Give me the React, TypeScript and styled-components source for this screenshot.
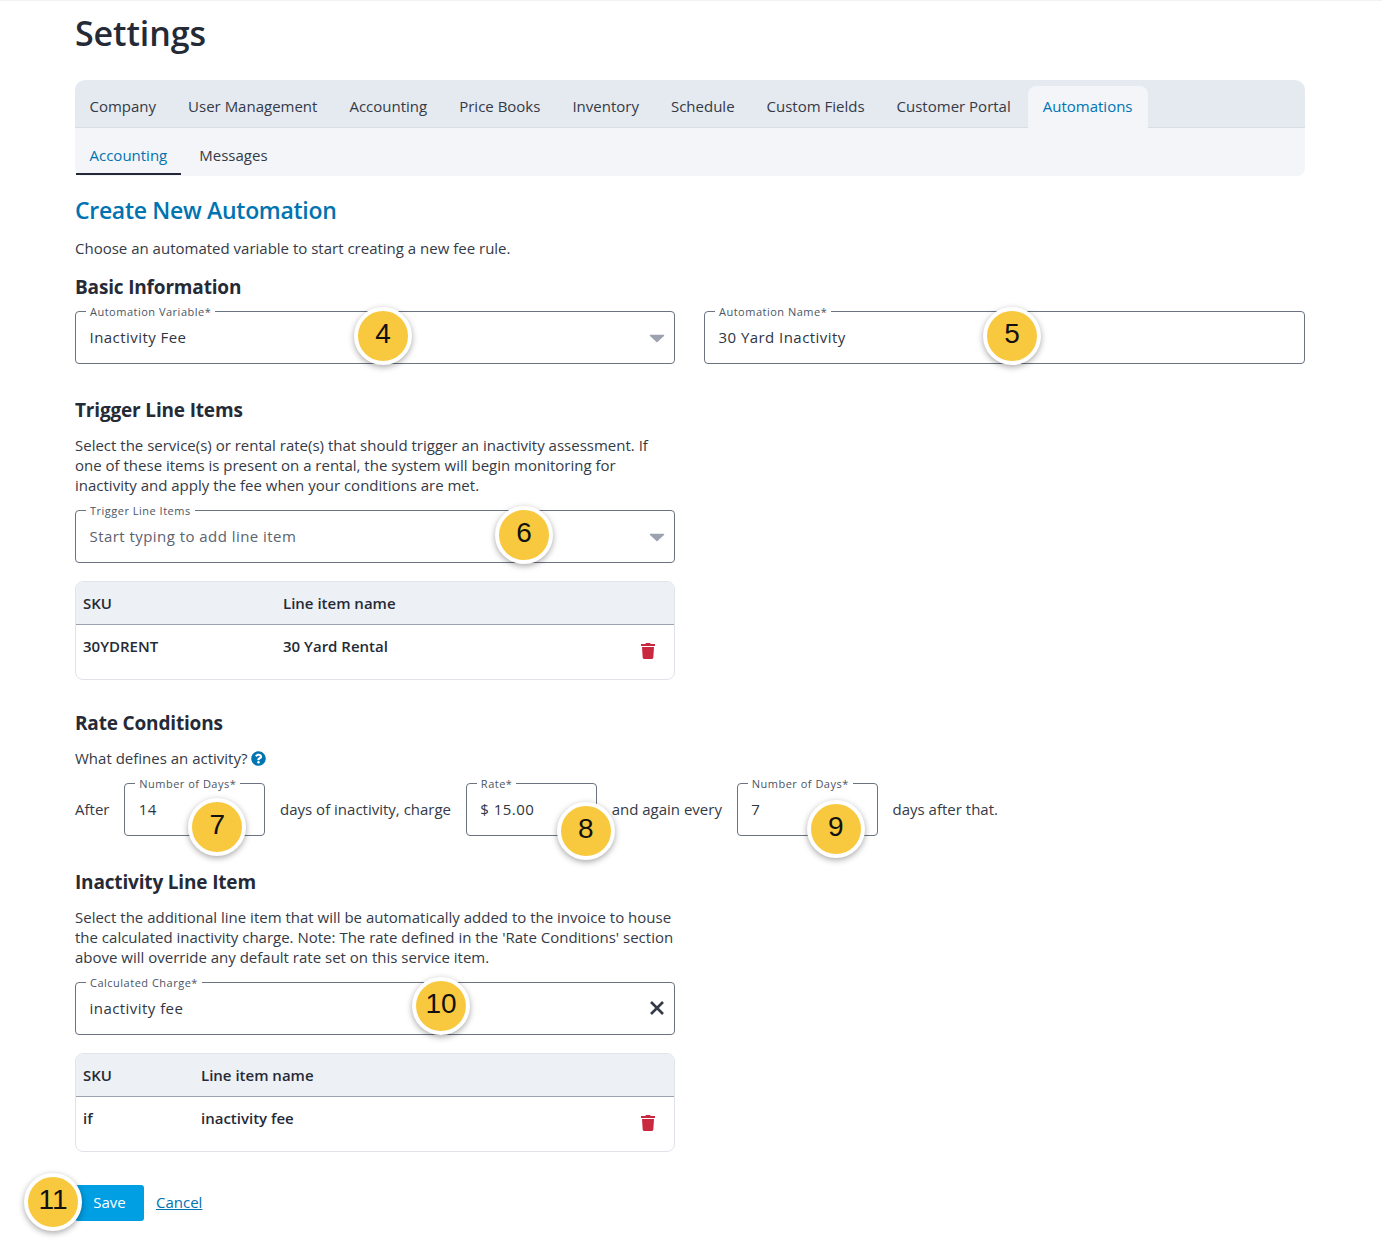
import styled, { createGlobalStyle } from 'styled-components';
import { FaTrash, FaQuestionCircle } from 'react-icons/fa';

const mainTabs = [
  'Company',
  'User Management',
  'Accounting',
  'Price Books',
  'Inventory',
  'Schedule',
  'Custom Fields',
  'Customer Portal',
  'Automations',
];

function Caret() {
  return (
    <CaretIcon viewBox="0 0 16 9">
      <path d="M1.5 1.5 H14.5 L8 7.5 Z" />
    </CaretIcon>
  );
}

export default function App() {
  return (
    <Page>
      <GlobalStyle />
      <PageTitle>Settings</PageTitle>

      <Tabs>
        {mainTabs.map((tab) => (
          <Tab key={tab} $active={tab === 'Automations'}>
            {tab}
          </Tab>
        ))}
      </Tabs>
      <SubTabs>
        <SubTab $active>Accounting</SubTab>
        <SubTab>Messages</SubTab>
      </SubTabs>

      <Heading>Create New Automation</Heading>
      <Intro>Choose an automated variable to start creating a new fee rule.</Intro>

      <SectionTitle $top={16}>Basic Information</SectionTitle>
      <TwoColumns>
        <Field>
          <FieldLabel>Automation Variable*</FieldLabel>
          <FieldValue>Inactivity Fee</FieldValue>
          <Caret />
          <Badge $left={278} $top={-5}>4</Badge>
        </Field>
        <Field>
          <FieldLabel>Automation Name*</FieldLabel>
          <FieldValue>30 Yard Inactivity</FieldValue>
          <Badge $left={278} $top={-5}>5</Badge>
        </Field>
      </TwoColumns>

      <SectionTitle $top={33}>Trigger Line Items</SectionTitle>
      <Description $top={12}>
        Select the service(s) or rental rate(s) that should trigger an inactivity assessment. If
        one of these items is present on a rental, the system will begin monitoring for
        inactivity and apply the fee when your conditions are met.
      </Description>
      <NarrowField $top={15}>
        <FieldLabel>Trigger Line Items</FieldLabel>
        <FieldValue $muted>Start typing to add line item</FieldValue>
        <Caret />
        <Badge $left={419} $top={-5}>6</Badge>
      </NarrowField>
      <ItemTable $columns="200px 1fr 50px">
        <TableHead>SKU</TableHead>
        <TableHead>Line item name</TableHead>
        <TableHead />
        <TableCell>30YDRENT</TableCell>
        <TableCell>30 Yard Rental</TableCell>
        <TableCell>
          <TrashIcon />
        </TableCell>
      </ItemTable>

      <SectionTitle $top={30}>Rate Conditions</SectionTitle>
      <Question>
        What defines an activity? <HelpIcon />
      </Question>
      <RateRow>
        <RateText>After</RateText>
        <SmallField $width={141}>
          <FieldLabel>Number of Days*</FieldLabel>
          <FieldValue>14</FieldValue>
          <Badge $left={63} $top={14}>7</Badge>
        </SmallField>
        <RateText>days of inactivity, charge</RateText>
        <SmallField $width={131}>
          <FieldLabel>Rate*</FieldLabel>
          <FieldValue>$ 15.00</FieldValue>
          <Badge $left={90} $top={18}>8</Badge>
        </SmallField>
        <RateText>and again every</RateText>
        <SmallField $width={141}>
          <FieldLabel>Number of Days*</FieldLabel>
          <FieldValue>7</FieldValue>
          <Badge $left={69} $top={16}>9</Badge>
        </SmallField>
        <RateText>days after that.</RateText>
      </RateRow>

      <SectionTitle $top={33}>Inactivity Line Item</SectionTitle>
      <Description $top={12}>
        Select the additional line item that will be automatically added to the invoice to house
        the calculated inactivity charge. Note: The rate defined in the 'Rate Conditions' section
        above will override any default rate set on this service item.
      </Description>
      <NarrowField $top={15}>
        <FieldLabel>Calculated Charge*</FieldLabel>
        <FieldValue>inactivity fee</FieldValue>
        <ClearIcon viewBox="0 0 16 16">
          <path d="M2 2 L14 14 M14 2 L2 14" />
        </ClearIcon>
        <Badge $left={336} $top={-6}>10</Badge>
      </NarrowField>
      <ItemTable $columns="118px 1fr 50px">
        <TableHead>SKU</TableHead>
        <TableHead>Line item name</TableHead>
        <TableHead />
        <TableCell>if</TableCell>
        <TableCell>inactivity fee</TableCell>
        <TableCell>
          <TrashIcon />
        </TableCell>
      </ItemTable>

      <Actions>
        <SaveButton>Save</SaveButton>
        <CancelLink href="#">Cancel</CancelLink>
        <Badge $left={-51} $top={-12}>11</Badge>
      </Actions>
    </Page>
  );
}

const GlobalStyle = createGlobalStyle`
  body {
    margin: 0;
    background: #fff;
    color: #2a2f3a;
    font-family: 'Open Sans', 'Noto Sans', sans-serif;
  }
`;

const Page = styled.div`
  width: 1230px;
  height: 1244px;
  padding: 0 77px 0 75px;
  box-sizing: content-box;
  border-top: 1px solid #f2f2f2;
`;

const PageTitle = styled.h1`
  margin: 0;
  height: 79px;
  padding-top: 9px;
  box-sizing: border-box;
  font-size: 34px;
  line-height: 47px;
  font-weight: 600;
  letter-spacing: -0.1px;
  color: #252a37;
`;

const Tabs = styled.div`
  display: flex;
  align-items: flex-end;
  gap: 2.5px;
  height: 48px;
  background: #e5e9f0;
  border-radius: 10px 10px 0 0;
  box-shadow: inset 0 -1px 0 #d9dde4;
`;

const Tab = styled.div<{ $active?: boolean }>`
  height: 42px;
  padding: 0 15px 2px 14.5px;
  box-sizing: border-box;
  display: flex;
  align-items: center;
  font-size: 15px;
  border-radius: 8px 8px 0 0;
  color: ${(p) => (p.$active ? '#0073b1' : '#343a46')};
  background: ${(p) => (p.$active ? '#f3f5f9' : 'transparent')};
`;

const SubTabs = styled.div`
  display: flex;
  height: 48px;
  padding-left: 1px;
  background: #f3f5f9;
  border-radius: 0 0 8px 8px;
`;

const SubTab = styled.div<{ $active?: boolean }>`
  display: flex;
  align-items: center;
  height: 47px;
  padding: 8px 14px 0 13.5px;
  box-sizing: border-box;
  font-size: 15px;
  color: ${(p) => (p.$active ? '#0073b1' : '#343a46')};
  border-bottom: 2px solid ${(p) => (p.$active ? '#232838' : 'transparent')};

  & + & {
    padding-left: 18px;
  }
`;

const Heading = styled.h2`
  margin: 16px 0 0;
  font-size: 23px;
  line-height: 36px;
  font-weight: 600;
  letter-spacing: -0.3px;
  color: #0073b1;
`;

const Intro = styled.p`
  margin: 10px 0 0;
  font-size: 15px;
  line-height: 20px;
  color: #343a46;
`;

const SectionTitle = styled.h3<{ $top: number }>`
  margin: ${(p) => p.$top}px 0 0;
  font-size: 19px;
  line-height: 26px;
  font-weight: 700;
  letter-spacing: -0.17px;
  color: #252a37;
`;

const TwoColumns = styled.div`
  display: grid;
  grid-template-columns: 600px 601px;
  gap: 29px;
  margin-top: 11px;
`;

const Field = styled.div`
  position: relative;
  height: 53px;
  box-sizing: border-box;
  display: flex;
  align-items: center;
  padding: 0 14px 2px 13.5px;
  border: 1px solid #6b7280;
  border-radius: 4px;
`;

const NarrowField = styled(Field)<{ $top: number }>`
  width: 600px;
  margin-top: ${(p) => p.$top}px;
`;

const SmallField = styled(Field)<{ $width: number }>`
  width: ${(p) => p.$width}px;
`;

const FieldLabel = styled.label`
  position: absolute;
  top: -7px;
  left: 10px;
  padding: 0 4px;
  background: #fff;
  font-size: 11px;
  line-height: 14px;
  letter-spacing: 0.5px;
  color: #4b5563;
  white-space: nowrap;
`;

const FieldValue = styled.span<{ $muted?: boolean }>`
  font-size: 15px;
  letter-spacing: 0.45px;
  color: ${(p) => (p.$muted ? '#5b6270' : '#2f3541')};
`;

const CaretIcon = styled.svg`
  position: absolute;
  right: 9px;
  top: 22px;
  width: 16px;
  height: 9px;
  fill: #9ca3af;
  stroke: #9ca3af;
  stroke-width: 1.5;
  stroke-linejoin: round;
`;

const ClearIcon = styled.svg`
  position: absolute;
  right: 9px;
  top: 17px;
  width: 16px;
  height: 16px;
  fill: none;
  stroke: #343a46;
  stroke-width: 2.6;
`;

const Badge = styled.div<{ $left: number; $top: number }>`
  position: absolute;
  left: ${(p) => p.$left}px;
  top: ${(p) => p.$top}px;
  z-index: 2;
  width: 58px;
  height: 58px;
  box-sizing: border-box;
  display: flex;
  align-items: center;
  justify-content: center;
  padding-bottom: 4px;
  border: 4px solid #fff;
  border-radius: 50%;
  background: #f8c93e;
  box-shadow: 0 2px 6px rgba(0, 0, 0, 0.35);
  font-family: 'Liberation Sans', Arial, sans-serif;
  font-size: 28px;
  color: #111;
`;

const Description = styled.p<{ $top: number }>`
  width: 600px;
  margin: ${(p) => p.$top}px 0 0;
  font-size: 15px;
  line-height: 20px;
  color: #343a46;
`;

const ItemTable = styled.div<{ $columns: string }>`
  display: grid;
  grid-template-columns: ${(p) => p.$columns};
  width: 600px;
  height: 99px;
  box-sizing: border-box;
  margin-top: 18px;
  border: 1px solid #e0e3e8;
  border-radius: 8px;
  overflow: hidden;
  grid-template-rows: 43px 1fr;
`;

const TableHead = styled.div`
  display: flex;
  align-items: center;
  padding-left: 7px;
  background: #edf0f5;
  border-bottom: 1px solid #9aa3af;
  font-size: 15px;
  font-weight: 600;
  color: #252a37;
`;

const TableCell = styled.div`
  padding: 11px 0 0 7px;
  font-size: 15px;
  line-height: 20px;
  font-weight: 600;
  color: #252a37;
`;

const TrashIcon = styled(FaTrash)`
  display: block;
  width: 14px;
  height: 16px;
  margin: 7px 0 0 10px;
  color: #c9283e;
`;

const Question = styled.p`
  display: flex;
  align-items: center;
  gap: 4px;
  margin: 12px 0 0;
  font-size: 15px;
  line-height: 20px;
  color: #343a46;
`;

const HelpIcon = styled(FaQuestionCircle)`
  width: 15px;
  height: 15px;
  color: #0073b1;
`;

const RateRow = styled.div`
  display: flex;
  align-items: center;
  gap: 14.8px;
  margin-top: 15px;
`;

const RateText = styled.span`
  padding-bottom: 2px;
  font-size: 15px;
  color: #343a46;
`;

const Actions = styled.div`
  position: relative;
  display: flex;
  align-items: center;
  gap: 12px;
  margin-top: 33px;
`;

const SaveButton = styled.button`
  width: 69px;
  height: 36px;
  padding: 0 0 2px;
  border: 0;
  border-radius: 3px;
  background: #009ee3;
  color: #fff;
  font-family: inherit;
  font-size: 15px;
`;

const CancelLink = styled.a`
  margin-bottom: 2px;
  font-size: 15px;
  color: #0073b1;
`;
